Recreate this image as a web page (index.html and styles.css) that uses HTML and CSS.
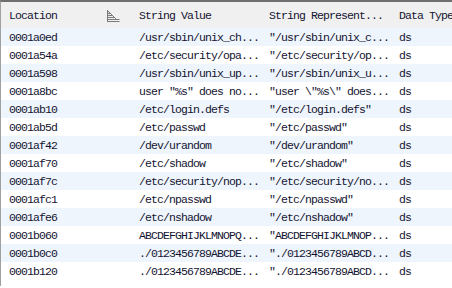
FILE: index.html
```html
<!DOCTYPE html>
<html lang="en">
<head>
  <meta charset="UTF-8" />
  <title>Strings</title>
  <link rel="stylesheet" href="styles.css">
</head>
<body>
  <div class="table">
    <div class="row head">
      <div class="cell loc">Location
        <svg class="sort" width="13" height="12" viewBox="0 0 13 12">
          <path d="M0.5 0 V12 M0.5 0.5 L9 9 M0.5 3.5 H3.5 M0.5 5.5 H5.5 M0.5 7.5 H7.5 M0.5 9.5 H12.5 M0.5 11.5 H12.5" stroke="#7a7a7a" fill="none" stroke-width="1"/>
        </svg>
      </div>
      <div class="cell">String Value</div>
      <div class="cell">String Represent...</div>
      <div class="cell">Data Type</div>
    </div>
    <div class="row"><div class="cell">0001a0ed</div><div class="cell">/usr/sbin/unix_ch...</div><div class="cell">"/usr/sbin/unix_c...</div><div class="cell">ds</div></div>
    <div class="row"><div class="cell">0001a54a</div><div class="cell">/etc/security/opa...</div><div class="cell">"/etc/security/op...</div><div class="cell">ds</div></div>
    <div class="row"><div class="cell">0001a598</div><div class="cell">/usr/sbin/unix_up...</div><div class="cell">"/usr/sbin/unix_u...</div><div class="cell">ds</div></div>
    <div class="row"><div class="cell">0001a8bc</div><div class="cell">user "%s" does no...</div><div class="cell">"user \"%s\" does...</div><div class="cell">ds</div></div>
    <div class="row"><div class="cell">0001ab10</div><div class="cell">/etc/login.defs</div><div class="cell">"/etc/login.defs"</div><div class="cell">ds</div></div>
    <div class="row"><div class="cell">0001ab5d</div><div class="cell">/etc/passwd</div><div class="cell">"/etc/passwd"</div><div class="cell">ds</div></div>
    <div class="row"><div class="cell">0001af42</div><div class="cell">/dev/urandom</div><div class="cell">"/dev/urandom"</div><div class="cell">ds</div></div>
    <div class="row"><div class="cell">0001af70</div><div class="cell">/etc/shadow</div><div class="cell">"/etc/shadow"</div><div class="cell">ds</div></div>
    <div class="row"><div class="cell">0001af7c</div><div class="cell">/etc/security/nop...</div><div class="cell">"/etc/security/no...</div><div class="cell">ds</div></div>
    <div class="row"><div class="cell">0001afc1</div><div class="cell">/etc/npasswd</div><div class="cell">"/etc/npasswd"</div><div class="cell">ds</div></div>
    <div class="row"><div class="cell">0001afe6</div><div class="cell">/etc/nshadow</div><div class="cell">"/etc/nshadow"</div><div class="cell">ds</div></div>
    <div class="row"><div class="cell">0001b060</div><div class="cell">ABCDEFGHIJKLMNOPQ...</div><div class="cell">"ABCDEFGHIJKLMNOP...</div><div class="cell">ds</div></div>
    <div class="row"><div class="cell">0001b0c0</div><div class="cell">./0123456789ABCDE...</div><div class="cell">"./0123456789ABCD...</div><div class="cell">ds</div></div>
    <div class="row"><div class="cell">0001b120</div><div class="cell">./0123456789ABCDE...</div><div class="cell">"./0123456789ABCD...</div><div class="cell">ds</div></div>
  </div>
</body>
</html>
```

FILE: styles.css
```css
body {
  margin: 0;
  background: #ffffff;
  font-family: "Liberation Mono", monospace;
  font-size: 11.5px;
  letter-spacing: -0.9px;
  color: #141432;
  width: 452px;
  height: 288px;
  overflow: hidden;
}

.table {
  border-top: 2px solid #6f6f6f;
  border-left: 1px solid #a0a0a0;
  height: 284px;
}

.row {
  display: grid;
  grid-template-columns: 130px 130px 130px 1fr;
  height: 18px;
  align-items: center;
}

.row:nth-child(even) {
  background: #eef5fd;
}

.row.head {
  height: 26px;
  background: #f0f0f0;
}

.cell {
  padding-left: 8px;
  white-space: nowrap;
  overflow: hidden;
}

.loc {
  display: flex;
  align-items: center;
}

.sort {
  margin-left: 50px;
  margin-top: 1px;
}
```
